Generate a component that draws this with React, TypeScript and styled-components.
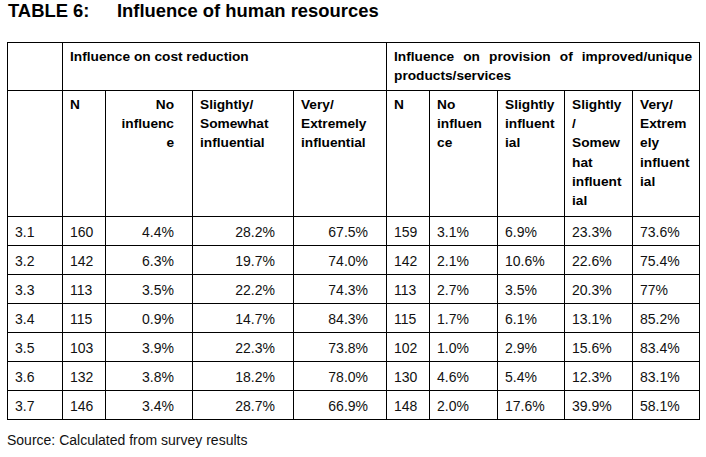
import React from 'react';
import styled, { createGlobalStyle } from 'styled-components';

const GlobalStyle = createGlobalStyle`
  html, body {
    margin: 0;
    padding: 0;
    background: #ffffff;
  }
  body {
    font-family: "Liberation Sans", Arial, sans-serif;
    color: #000;
  }
`;

const Page = styled.div`
  width: 706px;
  height: 457px;
  padding: 0 0 0 7px;
  box-sizing: border-box;
`;

const Title = styled.h1`
  margin: 0 0 21px 1px;
  font-size: 18.4px;
  font-weight: bold;
  color: #000;
  line-height: 21px;
`;

const TitleLabel = styled.span`
  display: inline-block;
  width: 109px;
`;

const Table = styled.table`
  border-collapse: collapse;
  table-layout: fixed;
  width: 693px;
  font-size: 14px;
`;

const GroupCell = styled.th<{ $justify?: boolean }>`
  border: 1px solid #000;
  padding: 4px 7px 0 7px;
  vertical-align: top;
  text-align: ${(p) => (p.$justify ? 'justify' : 'left')};
  font-size: 13.7px;
  font-weight: bold;
  line-height: 19px;
  color: #000;
`;

const HeadCell = styled.th<{ $right?: boolean }>`
  border: 1px solid #000;
  padding: 4px ${(p) => (p.$right ? '18px' : '6px')} 0 7px;
  vertical-align: top;
  text-align: ${(p) => (p.$right ? 'right' : 'left')};
  font-size: 13.7px;
  font-weight: bold;
  line-height: 19.2px;
  white-space: nowrap;
  color: #000;
`;

const Cell = styled.td<{ $right?: boolean }>`
  border: 1px solid #000;
  padding: 1px ${(p) => (p.$right ? '18px' : '4px')} 0 7px;
  vertical-align: middle;
  text-align: ${(p) => (p.$right ? 'right' : 'left')};
  white-space: nowrap;
  color: #111;
`;

const GroupRow = styled.tr`
  height: 48px;
`;

const HeadRow = styled.tr`
  height: 126px;
`;

const DataRow = styled.tr`
  height: 29px;
`;

const Source = styled.p`
  margin: 12px 0 0 0;
  font-size: 14px;
  line-height: 16px;
  color: #111;
`;

const colWidths = [55, 43, 87, 101, 93, 43, 68, 67, 68, 67];

type Head = { lines: string[]; right?: boolean };

const costHeads: Head[] = [
  { lines: ['N'] },
  { lines: ['No', 'influenc', 'e'], right: true },
  { lines: ['Slightly/', 'Somewhat', 'influential'] },
  { lines: ['Very/', 'Extremely', 'influential'] },
];

const productHeads: Head[] = [
  { lines: ['N'] },
  { lines: ['No', 'influen', 'ce'] },
  { lines: ['Slightly', 'influent', 'ial'] },
  { lines: ['Slightly', '/', 'Somew', 'hat', 'influent', 'ial'] },
  { lines: ['Very/', 'Extrem', 'ely', 'influent', 'ial'] },
];

const rows: string[][] = [
  ['3.1', '160', '4.4%', '28.2%', '67.5%', '159', '3.1%', '6.9%', '23.3%', '73.6%'],
  ['3.2', '142', '6.3%', '19.7%', '74.0%', '142', '2.1%', '10.6%', '22.6%', '75.4%'],
  ['3.3', '113', '3.5%', '22.2%', '74.3%', '113', '2.7%', '3.5%', '20.3%', '77%'],
  ['3.4', '115', '0.9%', '14.7%', '84.3%', '115', '1.7%', '6.1%', '13.1%', '85.2%'],
  ['3.5', '103', '3.9%', '22.3%', '73.8%', '102', '1.0%', '2.9%', '15.6%', '83.4%'],
  ['3.6', '132', '3.8%', '18.2%', '78.0%', '130', '4.6%', '5.4%', '12.3%', '83.1%'],
  ['3.7', '146', '3.4%', '28.7%', '66.9%', '148', '2.0%', '17.6%', '39.9%', '58.1%'],
];

// columns 2-4 (cost reduction percentages) are right aligned
const rightAligned = (i: number) => i >= 2 && i <= 4;

function HeadText({ lines }: { lines: string[] }) {
  return (
    <>
      {lines.map((l, i) => (
        <React.Fragment key={i}>
          {i > 0 && <br />}
          {l}
        </React.Fragment>
      ))}
    </>
  );
}

export default function App() {
  return (
    <Page>
      <GlobalStyle />
      <Title>
        <TitleLabel>TABLE 6:</TitleLabel>Influence of human resources
      </Title>
      <Table>
        <colgroup>
          {colWidths.map((w, i) => (
            <col key={i} style={{ width: w }} />
          ))}
        </colgroup>
        <thead>
          <GroupRow>
            <GroupCell />
            <GroupCell colSpan={4}>Influence on cost reduction</GroupCell>
            <GroupCell colSpan={5} $justify>
              Influence on provision of improved/unique products/services
            </GroupCell>
          </GroupRow>
          <HeadRow>
            <HeadCell />
            {costHeads.map((h, i) => (
              <HeadCell key={i} $right={h.right}>
                <HeadText lines={h.lines} />
              </HeadCell>
            ))}
            {productHeads.map((h, i) => (
              <HeadCell key={i}>
                <HeadText lines={h.lines} />
              </HeadCell>
            ))}
          </HeadRow>
        </thead>
        <tbody>
          {rows.map((r) => (
            <DataRow key={r[0]}>
              {r.map((v, i) => (
                <Cell key={i} $right={rightAligned(i)}>
                  {v}
                </Cell>
              ))}
            </DataRow>
          ))}
        </tbody>
      </Table>
      <Source>Source: Calculated from survey results</Source>
    </Page>
  );
}
